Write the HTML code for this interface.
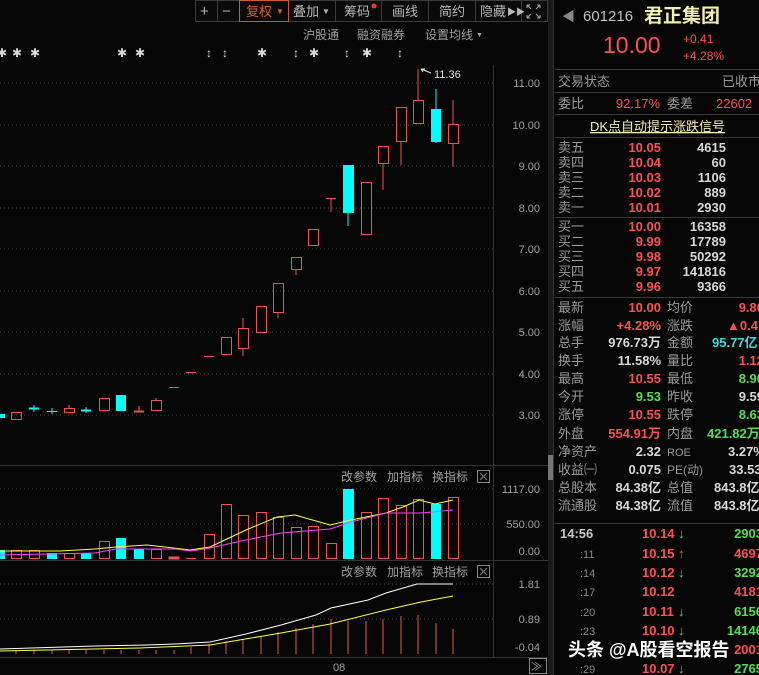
<!DOCTYPE html>
<html><head><meta charset="utf-8"><style>
html,body{margin:0;padding:0;background:#060606;width:759px;height:675px;overflow:hidden}
svg{display:block;font-family:"Liberation Sans","Noto Sans CJK SC",sans-serif}
</style></head><body>
<svg width="759" height="675" viewBox="0 0 759 675" xmlns="http://www.w3.org/2000/svg">
<rect width="759" height="675" fill="#060606"/>
<!-- toolbar -->
<g font-size="13" fill="#b8b8b8">
<rect x="195.5" y="0.5" width="352" height="21" fill="#0a0a0a" stroke="#3a3a3a"/>
<g stroke="#3a3a3a"><line x1="217.5" y1="0" x2="217.5" y2="22"/><line x1="239.5" y1="0" x2="239.5" y2="22"/><line x1="288.5" y1="0" x2="288.5" y2="22"/><line x1="335.5" y1="0" x2="335.5" y2="22"/><line x1="381.5" y1="0" x2="381.5" y2="22"/><line x1="428.5" y1="0" x2="428.5" y2="22"/><line x1="475.5" y1="0" x2="475.5" y2="22"/><line x1="521.5" y1="0" x2="521.5" y2="22"/></g>
<rect x="239.5" y="0.5" width="49" height="21" fill="none" stroke="#d05a20"/>
<text x="200" y="16" font-size="15">+</text><text x="222" y="16" font-size="15">−</text>
<text x="246" y="16" fill="#e06020">复权</text><text x="276" y="14" font-size="8" fill="#e06020">▼</text>
<text x="293" y="16">叠加</text><text x="322" y="14" font-size="8">▼</text>
<text x="344" y="16">筹码</text><circle cx="374" cy="6" r="2.5" fill="#ff3030"/>
<text x="392" y="16">画线</text><text x="439" y="16">简约</text>
<text x="480" y="16">隐藏</text><text x="507" y="15" font-size="9">▶▶</text>
<path d="M527 5l4 4M527 5h3M527 5v3M540 5l-4 4M540 5h-3M540 5v3M527 18l4-4M527 18h3M527 18v-3M540 18l-4-4M540 18h-3M540 18v-3" stroke="#aaa" fill="none"/>
</g>
<g font-size="12" fill="#a0a0a0">
<text x="303" y="39">沪股通</text><text x="357" y="39">融资融券</text><text x="425" y="39">设置均线</text><text x="476" y="37" font-size="7">▼</text>
</g>
<g font-size="12" fill="#d8d8d8">
<text x="-3" y="57">✱</text><text x="12" y="57">✱</text><text x="30" y="57">✱</text><text x="117" y="57">✱</text><text x="135" y="57">✱</text><text x="257" y="57">✱</text><text x="309" y="57">✱</text><text x="362" y="57">✱</text>
<text x="206" y="57">↕</text><text x="222" y="57">↕</text><text x="293" y="57">↕</text><text x="344" y="57">↕</text><text x="397" y="57">↕</text>
</g>
<!-- grid -->
<g stroke="#4a4a4a" stroke-dasharray="1,3">
<line x1="0" y1="83" x2="493" y2="83"/><line x1="0" y1="125" x2="493" y2="125"/><line x1="0" y1="166" x2="493" y2="166"/><line x1="0" y1="208" x2="493" y2="208"/><line x1="0" y1="249" x2="493" y2="249"/><line x1="0" y1="291" x2="493" y2="291"/><line x1="0" y1="332" x2="493" y2="332"/><line x1="0" y1="374" x2="493" y2="374"/><line x1="0" y1="415" x2="493" y2="415"/>
<line x1="0" y1="489" x2="493" y2="489"/><line x1="0" y1="524" x2="493" y2="524"/><line x1="0" y1="584" x2="493" y2="584"/><line x1="0" y1="619" x2="493" y2="619"/>
</g>
<g stroke="#333"><line x1="493.5" y1="65" x2="493.5" y2="657"/><line x1="0" y1="465.5" x2="548" y2="465.5"/><line x1="0" y1="560.5" x2="548" y2="560.5"/><line x1="0" y1="657.5" x2="548" y2="657.5"/><line x1="548.5" y1="0" x2="548.5" y2="675"/><line x1="553.5" y1="0" x2="553.5" y2="675"/></g>
<rect x="548" y="0" width="5" height="675" fill="#1a1a1a"/><rect x="548" y="455" width="5" height="25" fill="#777"/>
<g font-size="11" fill="#a0a0a0" text-anchor="end">
<text x="540" y="87">11.00</text><text x="540" y="129">10.00</text><text x="540" y="170">9.00</text><text x="540" y="212">8.00</text><text x="540" y="253">7.00</text><text x="540" y="295">6.00</text><text x="540" y="336">5.00</text><text x="540" y="378">4.00</text><text x="540" y="419">3.00</text>
<text x="540" y="493">1117.00</text><text x="540" y="528">550.00</text><text x="540" y="555">0.00</text>
<text x="540" y="588">1.81</text><text x="540" y="623">0.89</text><text x="540" y="651">-0.04</text>
</g>
<text x="434" y="78" font-size="11" fill="#e0e0e0">11.36</text>
<path d="M421 69l10 4M421 69l4 0M421 69l2 3" stroke="#e0e0e0" fill="none"/>
<!-- candles -->
<g stroke="#f05050" fill="none" stroke-width="1">
<rect x="11.5" y="412.5" width="10" height="7"/>
<line x1="69" y1="405" x2="69" y2="408"/><rect x="64.5" y="408.5" width="10" height="4"/>
<rect x="99.5" y="398.5" width="10" height="12"/>
<line x1="139" y1="406" x2="139" y2="412"/><line x1="134" y1="411.5" x2="144" y2="411.5" stroke-width="2"/>
<line x1="156" y1="398" x2="156" y2="400"/><rect x="151.5" y="400.5" width="10" height="10"/>
<line x1="169" y1="387.5" x2="179" y2="387.5"/><line x1="186" y1="372.5" x2="196" y2="372.5"/><line x1="204" y1="356.5" x2="214" y2="356.5"/>
<rect x="221.5" y="337.5" width="10" height="17"/>
<line x1="243" y1="318" x2="243" y2="356"/><rect x="238.5" y="328.5" width="10" height="20" fill="#060606"/>
<rect x="256.5" y="306.5" width="10" height="26"/>
<line x1="278" y1="312" x2="278" y2="318"/><rect x="273.5" y="283.5" width="10" height="29"/>
<line x1="296" y1="269" x2="296" y2="275"/><rect x="291.5" y="257.5" width="10" height="12"/>
<rect x="308.5" y="229.5" width="10" height="16"/>
<line x1="326" y1="198.5" x2="336" y2="198.5"/><line x1="331" y1="198" x2="331" y2="212"/>
<rect x="361.5" y="182.5" width="10" height="52"/>
<line x1="383" y1="163" x2="383" y2="190"/><rect x="378.5" y="146.5" width="10" height="17"/>
<line x1="401" y1="141" x2="401" y2="165"/><rect x="396.5" y="107.5" width="10" height="34"/>
<line x1="418" y1="69" x2="418" y2="124"/><rect x="413.5" y="100.5" width="10" height="23" fill="#060606"/>
<line x1="453" y1="100" x2="453" y2="167"/><rect x="448.5" y="124.5" width="10" height="19" fill="#060606"/>
</g>
<g fill="#00ffff" stroke="#00ffff">
<rect x="0" y="414" width="5" height="4" stroke="none"/>
<line x1="29" y1="408.5" x2="39" y2="408.5" stroke-width="2"/><line x1="34" y1="405" x2="34" y2="412"/>
<line x1="47" y1="411.5" x2="57" y2="411.5"/><line x1="52" y1="408" x2="52" y2="414"/>
<line x1="81" y1="410.5" x2="91" y2="410.5" stroke-width="2"/><line x1="86" y1="407" x2="86" y2="413"/>
<rect x="116" y="395" width="10" height="16" stroke="none"/>
<line x1="348" y1="213" x2="348" y2="226"/><rect x="343" y="165" width="11" height="48" stroke="none"/>
<line x1="436" y1="89" x2="436" y2="143"/><rect x="431" y="109" width="10" height="33" stroke="none"/>
</g>
<!-- volume -->
<g font-size="12" fill="#a0a0a0"><text x="341" y="481">改参数</text><text x="387" y="481">加指标</text><text x="432" y="481">换指标</text>
<text x="341" y="576">改参数</text><text x="387" y="576">加指标</text><text x="432" y="576">换指标</text></g>
<g stroke="#888" fill="none"><rect x="477.5" y="470.5" width="12" height="12"/><path d="M480 473l7 7M487 473l-7 7"/><rect x="477.5" y="565.5" width="12" height="12"/><path d="M480 568l7 7M487 568l-7 7"/></g>
<g stroke="#f05050" fill="none">
<rect x="11.5" y="550.5" width="10" height="8"/><rect x="29.5" y="550.5" width="10" height="8"/><rect x="64.5" y="553.5" width="10" height="5"/><rect x="99.5" y="541.5" width="10" height="17"/><rect x="151.5" y="549.5" width="10" height="9"/><rect x="169" y="557" width="10" height="2" fill="#f05050"/><line x1="186" y1="558.5" x2="196" y2="558.5"/>
<rect x="204.5" y="534.5" width="10" height="24"/><rect x="221.5" y="504.5" width="10" height="54"/><rect x="238.5" y="515.5" width="10" height="43"/><rect x="256.5" y="512.5" width="10" height="46"/><rect x="273.5" y="517.5" width="10" height="41"/><rect x="291.5" y="527.5" width="10" height="31"/><rect x="308.5" y="526.5" width="10" height="32"/><rect x="326.5" y="543.5" width="10" height="15"/><rect x="361.5" y="512.5" width="10" height="46"/><rect x="378.5" y="498.5" width="10" height="60"/><rect x="396.5" y="505.5" width="10" height="53"/><rect x="413.5" y="499.5" width="10" height="59"/><rect x="448.5" y="497.5" width="10" height="61"/>
</g>
<g fill="#00ffff"><rect x="0" y="550" width="5" height="9"/><rect x="47" y="553" width="10" height="6"/><rect x="81" y="553" width="10" height="6"/><rect x="116" y="538" width="10" height="21"/><rect x="134" y="549" width="10" height="10"/><rect x="343" y="489" width="11" height="70"/><rect x="431" y="504" width="10" height="55"/></g>
<polyline fill="none" stroke="#ffff40" points="0,551 60,551 95,549 116,547 147,545 165,547 190,550 210,547 246,530 277,517 295,515 330,525 351,520 386,513 403,507 419,500 435,504 453,500"/>
<polyline fill="none" stroke="#ff40ff" points="0,555 95,553 116,549 175,549 191,551 210,548 246,540 281,533 330,529 351,522 386,513 421,513 453,510"/>
<!-- macd -->
<g stroke="#f05050">
<line x1="16" y1="654" x2="16" y2="650"/><line x1="34" y1="654" x2="34" y2="650"/><line x1="52" y1="654" x2="52" y2="650"/><line x1="69" y1="654" x2="69" y2="650"/><line x1="86" y1="654" x2="86" y2="650"/><line x1="104" y1="654" x2="104" y2="650"/><line x1="121" y1="654" x2="121" y2="650"/><line x1="139" y1="654" x2="139" y2="650"/><line x1="156" y1="654" x2="156" y2="650"/><line x1="174" y1="654" x2="174" y2="650"/><line x1="191" y1="654" x2="191" y2="647"/><line x1="209" y1="654" x2="209" y2="644"/><line x1="226" y1="654" x2="226" y2="641"/><line x1="243" y1="654" x2="243" y2="639"/><line x1="261" y1="654" x2="261" y2="636"/><line x1="278" y1="654" x2="278" y2="632"/><line x1="296" y1="654" x2="296" y2="628"/><line x1="313" y1="654" x2="313" y2="624"/><line x1="331" y1="654" x2="331" y2="619"/><line x1="348" y1="654" x2="348" y2="621"/><line x1="366" y1="654" x2="366" y2="621"/><line x1="383" y1="654" x2="383" y2="619"/><line x1="401" y1="654" x2="401" y2="616"/><line x1="418" y1="654" x2="418" y2="615"/><line x1="436" y1="654" x2="436" y2="623"/><line x1="453" y1="654" x2="453" y2="629"/>
</g>
<polyline fill="none" stroke="#ffffff" points="0,649 95,646 147,645 175,644 210,642 246,634 281,625 316,615 331,608 368,600 386,593 417,584 453,584"/>
<polyline fill="none" stroke="#ffff40" points="0,651 140,648 210,645 281,633 330,624 386,610 421,602 453,596"/>
<text x="333" y="671" font-size="11" fill="#a0a0a0">08</text>
<rect x="529.5" y="658.5" width="17" height="15" fill="none" stroke="#888"/><text x="531" y="670" font-size="11" fill="#aaa">≫</text>
<!-- right panel -->
<text x="562" y="21" font-size="13" fill="#888">◀</text>
<text x="583" y="21" font-size="15" fill="#c0c0c0">601216</text>
<text x="644" y="22" font-size="19" font-weight="bold" fill="#f0f0b0">君正集团</text>
<text x="603" y="53" font-size="23" fill="#ff5050">10.00</text>
<text x="683" y="43" font-size="12" fill="#ff5050">+0.41</text>
<text x="683" y="60" font-size="12" fill="#ff5050">+4.28%</text>
<g stroke="#3a3a3a"><line x1="555" y1="69.5" x2="759" y2="69.5"/><line x1="555" y1="92.5" x2="759" y2="92.5"/><line x1="555" y1="114.5" x2="759" y2="114.5"/><line x1="555" y1="137.5" x2="759" y2="137.5"/><line x1="555" y1="217.5" x2="759" y2="217.5"/><line x1="555" y1="297.5" x2="759" y2="297.5"/><line x1="555" y1="523.5" x2="759" y2="523.5"/></g>
<g font-size="13" fill="#9a9a9a">
<text x="558" y="86">交易状态</text><text x="722" y="86">已收市</text>
<text x="558" y="108">委比</text><text x="667" y="108">委差</text>
</g>
<text x="660" y="108" font-size="13" fill="#ff5050" text-anchor="end">92.17%</text>
<text x="716" y="108" font-size="13" fill="#ff5050">22602</text>
<text x="590" y="131" font-size="13" fill="#f0f0b0" text-decoration="underline">DK点自动提示涨跌信号</text>
<g font-size="13" fill="#9a9a9a">
<text x="558" y="152">卖五</text><text x="558" y="167">卖四</text><text x="558" y="182">卖三</text><text x="558" y="197">卖二</text><text x="558" y="212">卖一</text>
<text x="558" y="231">买一</text><text x="558" y="246">买二</text><text x="558" y="261">买三</text><text x="558" y="276">买四</text><text x="558" y="291">买五</text>
</g>
<g font-size="13" fill="#ff5050" text-anchor="end" font-weight="bold">
<text x="661" y="152">10.05</text><text x="661" y="167">10.04</text><text x="661" y="182">10.03</text><text x="661" y="197">10.02</text><text x="661" y="212">10.01</text>
<text x="661" y="231">10.00</text><text x="661" y="246">9.99</text><text x="661" y="261">9.98</text><text x="661" y="276">9.97</text><text x="661" y="291">9.96</text>
</g>
<g font-size="13" fill="#d8d8d8" text-anchor="end" font-weight="bold">
<text x="726" y="152">4615</text><text x="726" y="167">60</text><text x="726" y="182">1106</text><text x="726" y="197">889</text><text x="726" y="212">2930</text>
<text x="726" y="231">16358</text><text x="726" y="246">17789</text><text x="726" y="261">50292</text><text x="726" y="276">141816</text><text x="726" y="291">9366</text>
</g>
<g font-size="13" fill="#9a9a9a">
<text x="558" y="312">最新</text><text x="558" y="330">涨幅</text><text x="558" y="347">总手</text><text x="558" y="365">换手</text><text x="558" y="383">最高</text><text x="558" y="401">今开</text><text x="558" y="419">涨停</text><text x="558" y="438">外盘</text><text x="558" y="456">净资产</text><text x="558" y="474">收益㈠</text><text x="558" y="492">总股本</text><text x="558" y="510">流通股</text>
<text x="667" y="312">均价</text><text x="667" y="330">涨跌</text><text x="667" y="347">金额</text><text x="667" y="365">量比</text><text x="667" y="383">最低</text><text x="667" y="401">昨收</text><text x="667" y="419">跌停</text><text x="667" y="438">内盘</text><text x="667" y="456" font-size="11">ROE</text><text x="667" y="474" font-size="12">PE(动)</text><text x="667" y="492">总值</text><text x="667" y="510">流值</text>
</g>
<g font-size="13" text-anchor="end" font-weight="bold">
<text x="661" y="312" fill="#ff5050">10.00</text><text x="661" y="330" fill="#ff5050">+4.28%</text><text x="661" y="347" fill="#d8d8d8">976.73万</text><text x="661" y="365" fill="#d8d8d8">11.58%</text><text x="661" y="383" fill="#ff5050">10.55</text><text x="661" y="401" fill="#50e050">9.53</text><text x="661" y="419" fill="#ff5050">10.55</text><text x="661" y="438" fill="#ff5050">554.91万</text><text x="661" y="456" fill="#d8d8d8">2.32</text><text x="661" y="474" fill="#d8d8d8">0.075</text><text x="661" y="492" fill="#d8d8d8">84.38亿</text><text x="661" y="510" fill="#d8d8d8">84.38亿</text>
</g>
<g font-size="13" font-weight="bold">
<text x="764" y="312" fill="#ff5050" text-anchor="end">9.80</text><text x="727" y="330" fill="#ff5050">▲0.41</text><text x="712" y="347" fill="#30e0e0">95.77亿</text><text x="764" y="365" fill="#ff5050" text-anchor="end">1.12</text><text x="764" y="383" fill="#50e050" text-anchor="end">8.90</text><text x="764" y="401" fill="#d8d8d8" text-anchor="end">9.59</text><text x="764" y="419" fill="#50e050" text-anchor="end">8.63</text><text x="707" y="438" fill="#50e050">421.82万</text><text x="728" y="456" fill="#d8d8d8">3.27%</text><text x="729" y="474" fill="#d8d8d8">33.53</text><text x="714" y="492" fill="#d8d8d8">843.8亿</text><text x="714" y="510" fill="#d8d8d8">843.8亿</text>
</g>
<text x="560" y="538" font-size="13" font-weight="bold" fill="#c8c8c8">14:56</text>
<g font-size="11" fill="#888"><text x="580" y="558">:11</text><text x="580" y="577">:14</text><text x="580" y="596">:17</text><text x="580" y="616">:20</text><text x="580" y="635">:23</text><text x="580" y="673">:29</text></g>
<g font-size="13" fill="#ff5050" font-weight="bold"><text x="642" y="538">10.14</text><text x="642" y="558">10.15</text><text x="642" y="577">10.12</text><text x="642" y="596">10.12</text><text x="642" y="616">10.11</text><text x="642" y="635">10.10</text><text x="642" y="673">10.07</text></g>
<g font-size="13" font-weight="bold"><text x="678" y="538" fill="#50e050">↓</text><text x="678" y="558" fill="#ff5050">↑</text><text x="678" y="577" fill="#50e050">↓</text><text x="678" y="616" fill="#50e050">↓</text><text x="678" y="635" fill="#50e050">↓</text><text x="678" y="673" fill="#50e050">↓</text></g>
<g font-size="13" font-weight="bold" text-anchor="end"><text x="763" y="538" fill="#50e050">2903</text><text x="763" y="558" fill="#ff5050">4697</text><text x="763" y="577" fill="#50e050">3292</text><text x="763" y="596" fill="#ff5050">4181</text><text x="763" y="616" fill="#50e050">6156</text><text x="763" y="635" fill="#50e050">14146</text><text x="763" y="654" fill="#ff5050">2001</text><text x="763" y="673" fill="#50e050">2765</text></g>
<text x="568" y="656" font-size="18" font-weight="bold" fill="#ffffff" stroke="#000" stroke-width="0.6" paint-order="stroke">头条 @A股看空报告</text>
</svg>
</body></html>
